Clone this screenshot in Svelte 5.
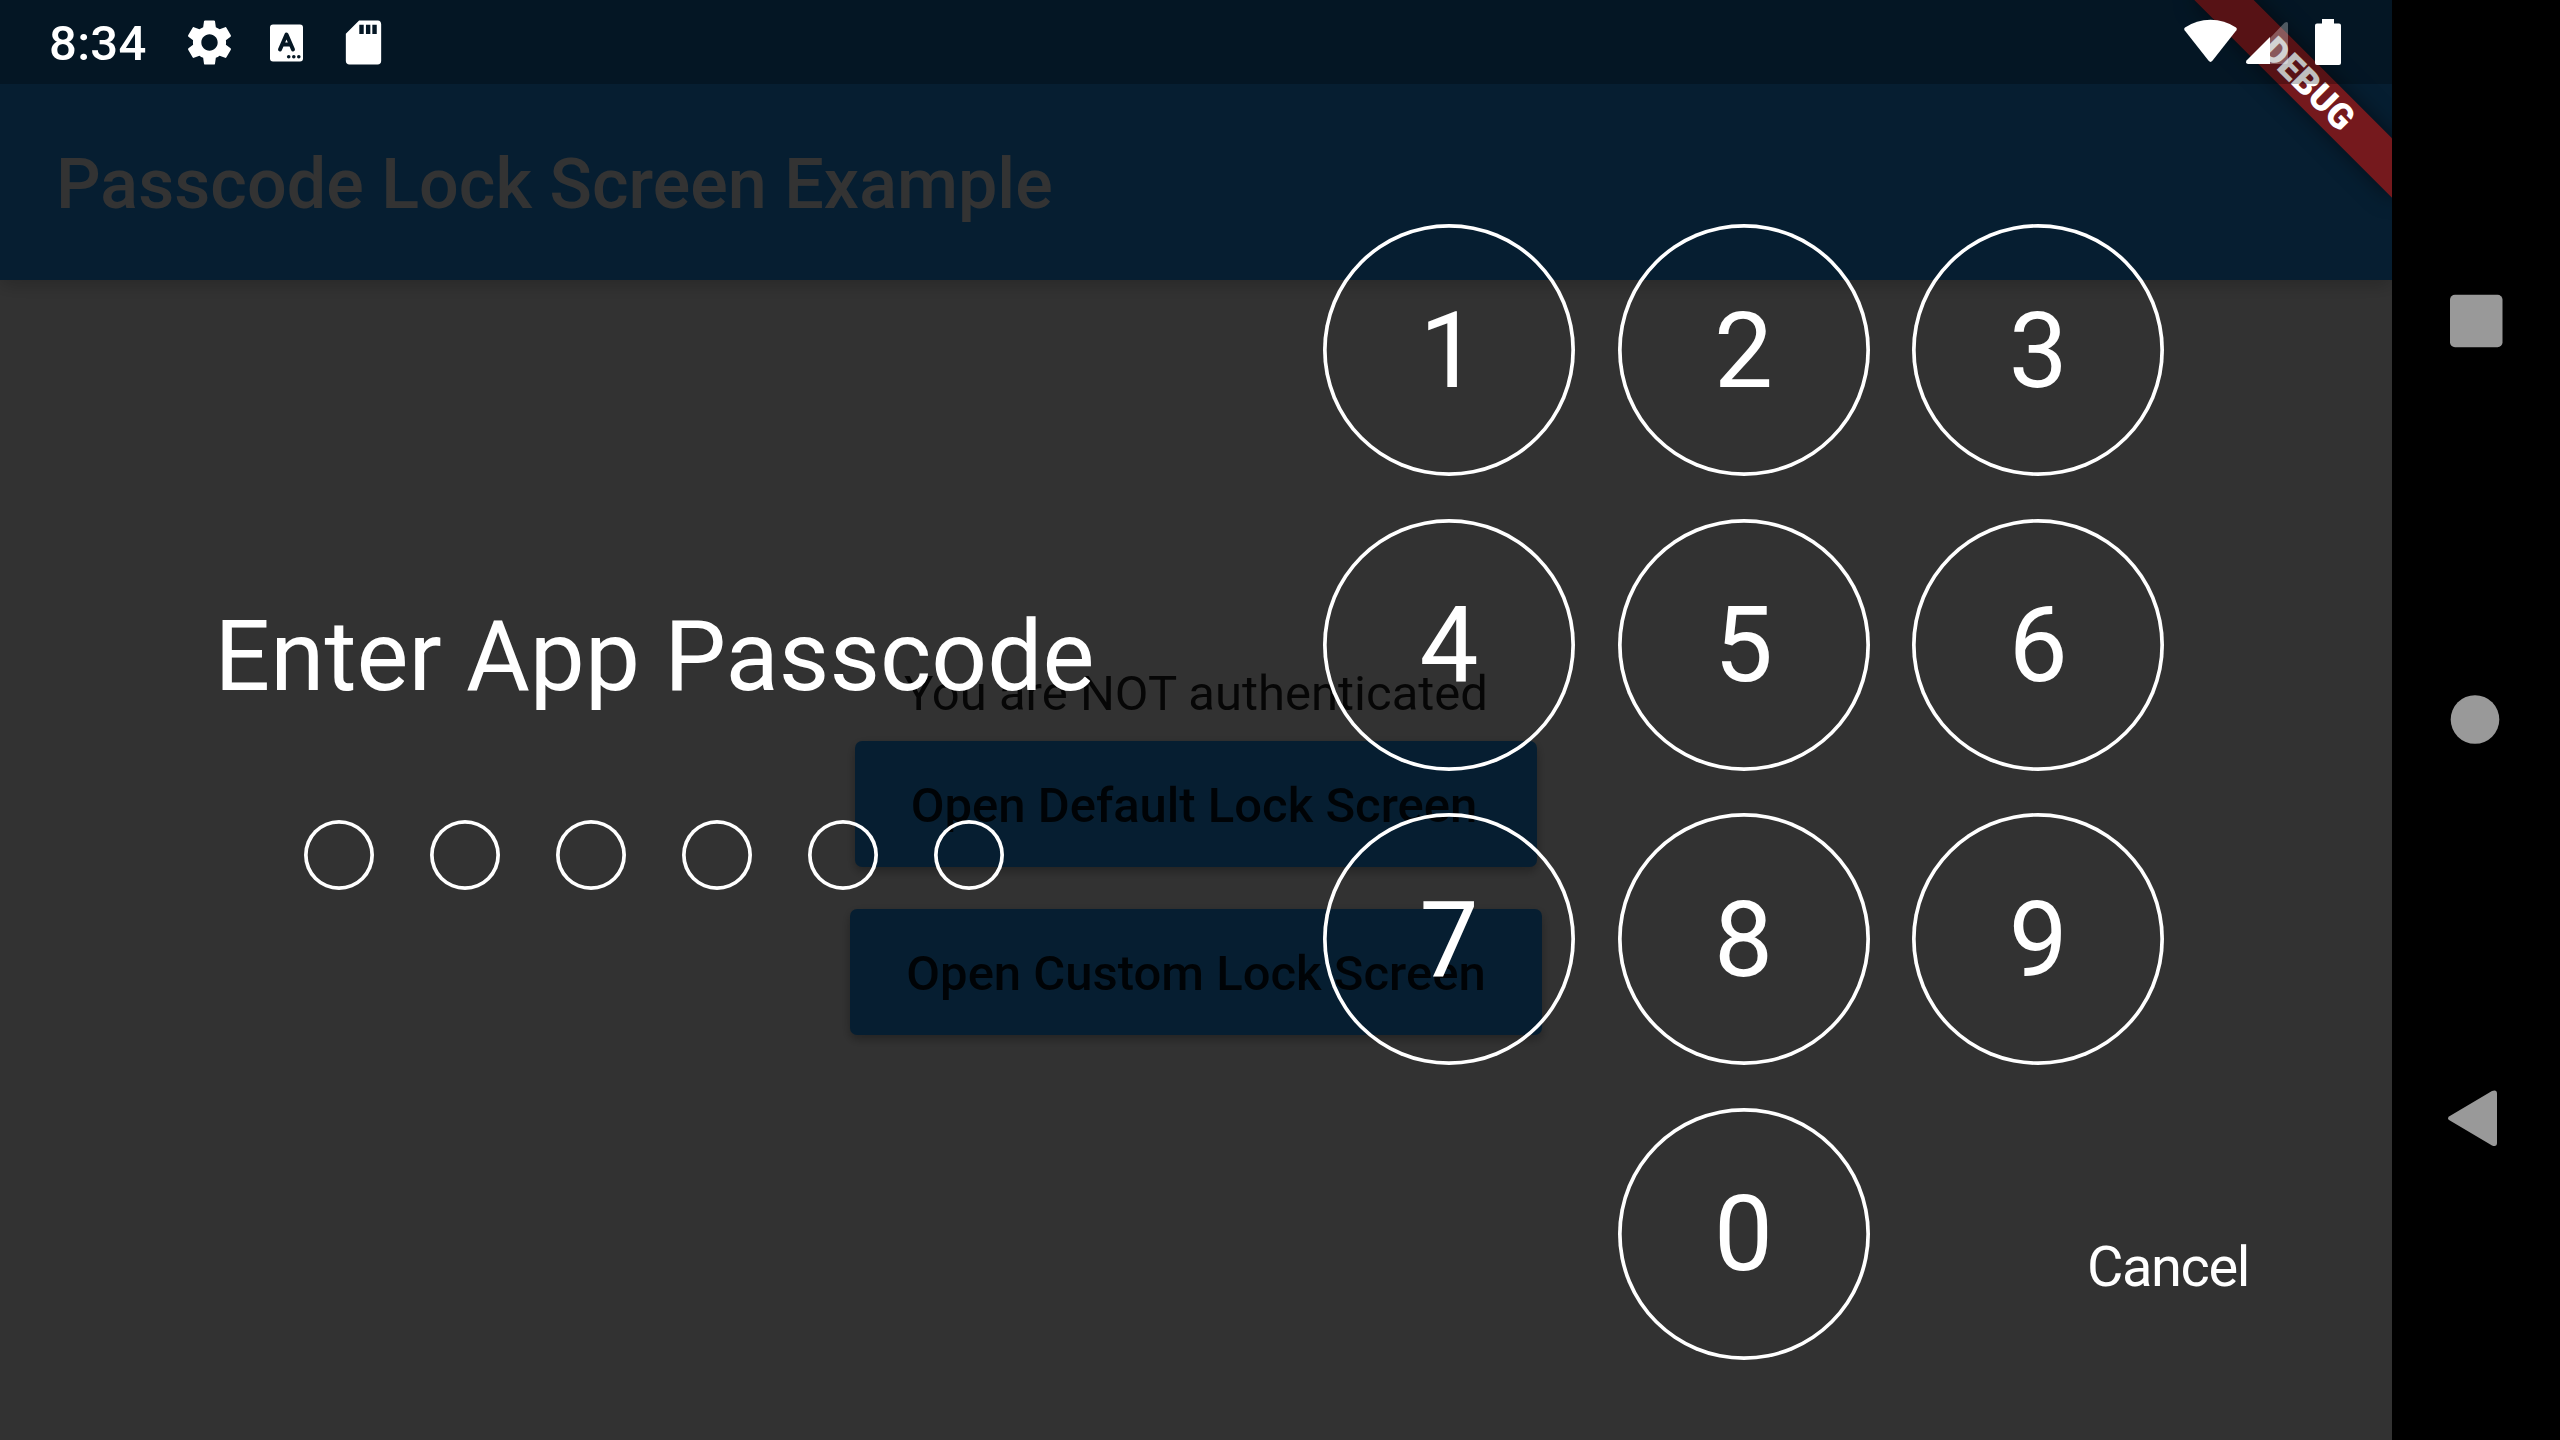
<script>
  const dots = [1, 2, 3, 4, 5, 6];
  const digits = ['1', '2', '3', '4', '5', '6', '7', '8', '9', '0'];
</script>

<div class="device">
  <div class="screen">
    <div class="page">
      <header class="appbar"><h1>Passcode Lock Screen Example</h1></header>
      <main class="content">
        <p>You are NOT authenticated</p>
        <button class="raised wide">Open Default Lock Screen</button>
        <button class="raised">Open Custom Lock Screen</button>
      </main>
    </div>

    <div class="lock">
      <section class="prompt">
        <h2>Enter App Passcode</h2>
        <div class="dots">
          {#each dots as dot (dot)}<span class="dot"></span>{/each}
        </div>
      </section>
      <section class="keypad">
        {#each digits as digit (digit)}
          <button class="key" class:zero={digit === '0'}>{digit}</button>
        {/each}
      </section>
      <button class="cancel">Cancel</button>
    </div>

    <div class="banner"><span>DEBUG</span></div>

    <div class="status">
      <span class="time">8:34</span>
      <svg class="icon" viewBox="0 0 24 24"><path d="M19.43 12.98c.04-.32.07-.64.07-.98s-.03-.66-.07-.98l2.11-1.65c.19-.15.24-.42.12-.64l-2-3.46c-.12-.22-.39-.3-.61-.22l-2.49 1c-.52-.4-1.08-.73-1.69-.98l-.38-2.65A.488.488 0 0 0 14 2h-4c-.25 0-.46.18-.49.42l-.38 2.65c-.61.25-1.17.59-1.69.98l-2.49-1c-.23-.09-.49 0-.61.22l-2 3.46c-.13.22-.07.49.12.64l2.11 1.65c-.04.32-.07.65-.07.98s.03.66.07.98l-2.11 1.65c-.19.15-.24.42-.12.64l2 3.46c.12.22.39.3.61.22l2.49-1c.52.4 1.08.73 1.69.98l.38 2.65c.03.24.24.42.49.42h4c.25 0 .46-.18.49-.42l.38-2.65c.61-.25 1.17-.59 1.69-.98l2.49 1c.23.09.49 0 .61-.22l2-3.46c.12-.22.07-.49-.12-.64l-2.11-1.65zM12 15.7c-2.04 0-3.7-1.66-3.7-3.7s1.66-3.7 3.7-3.7 3.7 1.66 3.7 3.7-1.66 3.7-3.7 3.7z" /></svg>
      <svg class="icon" viewBox="0 0 53 53">
        <rect x="10" y="8.5" width="33" height="37" rx="3" />
        <path class="cut" d="M20 33.5L26.5 18.5L33 33.5M22.5 28.5H30.5" />
        <g class="holes"><circle cx="28.7" cy="40.8" r="1.8" /><circle cx="33.8" cy="40.8" r="1.8" /><circle cx="38.8" cy="40.8" r="1.8" /></g>
      </svg>
      <svg class="icon" viewBox="0 0 24 24"><path fill-rule="evenodd" d="M18.5 2H10L4 8V20.4C4 21.4 4.7 22 5.6 22H18.4C19.4 22 20 21.3 20 20.4V3.7C20 2.7 19.4 2 18.5 2ZM10.1 4H12.1V8.2H10.1ZM13.1 4H15.1V8.2H13.1ZM16 4H18V8.2H16Z" /></svg>
      <svg class="system" width="160" height="48" viewBox="0 0 160 48">
        <path d="M.6 12.2Q-.4 10.6 1 9.5Q12.5 1.7 26.5 1.7T52 9.5Q53.4 10.6 52.4 12.2L28.4 42.8Q26.5 45 24.6 42.8Z" />
        <path class="faded" d="M86 20L100.5 4.8Q104 2.5 104 6V44Q104 46 102 46H86Z" />
        <path d="M86 19V46H64Q61 45.5 62.5 42.5Z" />
        <path d="M138 1H150V5.5H155Q157 5.5 157 7.5V45Q157 47 155 47H133Q131 47 131 45V7.5Q131 5.5 133 5.5H138Z" />
      </svg>
    </div>
  </div>

  <nav class="navbar">
    <svg viewBox="0 0 56 56"><rect x="2" y="1.7" width="52.5" height="52.5" rx="5" /></svg>
    <svg viewBox="0 0 56 56"><circle cx="27" cy="28.5" r="24.3" /></svg>
    <svg viewBox="0 0 56 56"><path d="M1 27.4L44 2Q49 .2 49 4.7V53.7Q49 58.2 44 56.4L1 31Q-1 29.2 1 27.4Z" /></svg>
  </nav>
</div>

<style>
  :global(body) {
    margin: 0;
    background: #000;
  }
  .device {
    display: flex;
    width: 2560px;
    height: 1440px;
    overflow: hidden;
    background: #000;
    font-family: Roboto, sans-serif;
  }
  button {
    font-family: inherit;
    border: 0;
    background: none;
    padding: 0;
    white-space: nowrap;
  }
  h1,
  h2,
  p {
    margin: 0;
    font-weight: 400;
    white-space: nowrap;
  }
  .screen {
    position: relative;
    display: grid;
    width: 2392px;
    height: 1440px;
    overflow: hidden;
  }
  .page,
  .lock {
    grid-area: 1 / 1;
    width: 2392px;
    height: 1440px;
    box-sizing: border-box;
  }
  .page {
    display: flex;
    flex-direction: column;
    background: #fafafa;
  }
  .appbar {
    display: flex;
    align-items: center;
    height: 192px;
    padding: 88px 56px 0;
    background: #2196f3;
    box-shadow: 0 6px 16px rgba(0, 0, 0, 0.15), 0 2px 26px rgba(0, 0, 0, 0.07);
  }
  h1 {
    color: #fff;
    font-size: 70px;
    font-weight: 500;
    line-height: 82px;
    letter-spacing: 0.06px;
  }
  .content {
    flex: 1;
    display: flex;
    flex-direction: column;
    align-items: center;
    padding-top: 385px;
  }
  p {
    margin-bottom: 19px;
    color: rgba(0, 0, 0, 0.87);
    font-size: 49px;
    line-height: 57px;
  }
  .raised {
    height: 126px;
    margin-bottom: 42px;
    padding: 2px 56px 0;
    border-radius: 7px;
    background: #2196f3;
    color: rgba(0, 0, 0, 0.87);
    font-size: 49px;
    font-weight: 500;
    box-shadow: 0 5px 8px rgba(0, 0, 0, 0.22), 0 2px 14px rgba(0, 0, 0, 0.1);
  }
  .wide {
    padding-right: 60px;
  }
  .lock {
    z-index: 1;
    display: flex;
    padding: 224px 0 0 216px;
    background: rgba(0, 0, 0, 0.8);
    color: #fff;
  }
  .prompt {
    flex-shrink: 0;
    display: flex;
    flex-direction: column;
    align-items: center;
    width: 877px;
    padding-top: 375px;
  }
  h2 {
    font-size: 98px;
    line-height: 115px;
  }
  .dots {
    display: flex;
    gap: 56px;
    margin-top: 105.5px;
    padding-right: 1px;
  }
  .dot {
    width: 70px;
    height: 70px;
    border-radius: 50%;
    box-shadow: inset 0 0 0 3.7px #fff;
  }
  .keypad {
    flex-shrink: 0;
    display: grid;
    grid-template-columns: repeat(3, 252px);
    grid-auto-rows: 252px;
    gap: 42.67px 42.6px;
    width: 841px;
    margin-left: 230px;
  }
  .key {
    padding-top: 2px;
    border-radius: 50%;
    box-shadow: inset 0 0 0 3.7px #fff;
    color: #fff;
    font-size: 105px;
    line-height: 1;
  }
  .zero {
    grid-column: 2;
  }
  /* Starts under the third key column, beside the zero. */
  .cancel {
    flex-shrink: 0;
    align-self: flex-end;
    margin: 0 0 140px -77px;
    color: #fff;
    font-size: 56px;
    line-height: 66px;
    letter-spacing: -1.435px;
  }
  .banner {
    position: absolute;
    z-index: 2;
    left: 2167.9px;
    top: 63.1px;
    display: flex;
    align-items: center;
    justify-content: center;
    width: 280px;
    height: 42px;
    transform: rotate(45deg);
    background: #75191d;
    box-shadow: 0 0 21px rgba(0, 0, 0, 0.5);
    color: #fff;
    font-size: 35.7px;
    font-weight: 900;
    line-height: 42px;
  }
  .status {
    grid-area: 1 / 1;
    z-index: 3;
    display: flex;
    align-items: center;
    height: 84px;
    padding: 0 48px 0 49px;
    box-sizing: border-box;
    background: rgba(0, 0, 0, 0.25);
    color: #fff;
  }
  .time {
    width: 134px;
    margin-top: 3px;
    font-size: 49px;
    font-weight: 500;
    line-height: 57px;
    letter-spacing: 0.3px;
  }
  .icon {
    width: 53px;
    height: 53px;
    margin-right: 24px;
    fill: #fff;
  }
  .cut {
    fill: none;
    stroke: #051724;
    stroke-width: 4;
    stroke-linecap: round;
    stroke-linejoin: round;
  }
  .holes {
    fill: #051724;
  }
  .system {
    margin-left: auto;
    fill: #fff;
  }
  .faded {
    fill-opacity: 0.3;
  }
  .navbar {
    display: flex;
    flex-direction: column;
    align-items: center;
    justify-content: space-between;
    width: 168px;
    height: 852px;
    padding-top: 293px;
  }
  .navbar svg {
    width: 56px;
    height: 56px;
    overflow: visible;
    fill: #999;
  }
</style>
